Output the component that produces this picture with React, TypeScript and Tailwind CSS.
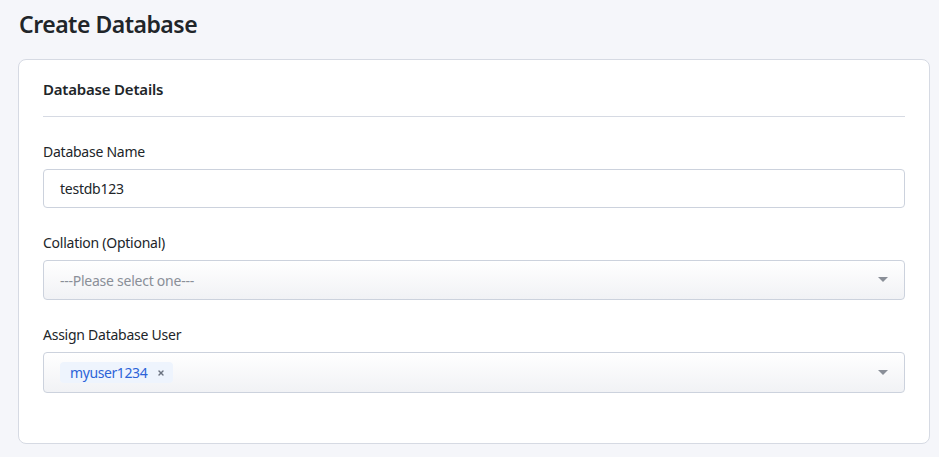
import { X } from "lucide-react";

function Caret() {
  return (
    <svg width="10" height="6" viewBox="0 0 10 6" className="shrink-0">
      <path d="M0 0h10L5 5z" fill="#8a8f98" />
    </svg>
  );
}

export default function App() {
  return (
    <div className="min-h-screen bg-[#f5f6fa] px-[18px] pt-[8px] pb-4 font-['Noto_Sans',sans-serif] text-[#212529]">
      <h1 className="text-[23px] font-semibold leading-[32px] tracking-[-0.5px] pl-[1px] mb-[19px]">
        Create Database
      </h1>

      <div className="w-[912px] rounded-[8px] border border-[#d6dae3] bg-white px-[24px] pt-[18px] pb-[50px]">
        <h2 className="text-[15px] font-semibold leading-[22px] tracking-[-0.2px] pb-[16px] border-b border-[#d6dae3]">
          Database Details
        </h2>

        <div className="mt-[25px] text-[14px] tracking-[-0.25px]">
          <label className="block leading-[20px] mb-[7px]">
            Database Name
          </label>
          <div className="flex h-[39px] items-center rounded-[4px] border border-[#ccd2dd] bg-white px-[16px]">
            testdb123
          </div>
        </div>

        <div className="mt-[25px] text-[14px] tracking-[-0.25px]">
          <label className="block leading-[20px] mb-[7px]">
            Collation (Optional)
          </label>
          <div className="flex h-[40px] items-center justify-between rounded-[4px] border border-[#ccd2dd] bg-gradient-to-b from-white to-[#f1f2f5] px-[16px] text-[#8a8f98]">
            <span>---Please select one---</span>
            <Caret />
          </div>
        </div>

        <div className="mt-[25px] text-[14px] tracking-[-0.25px]">
          <label className="block leading-[20px] mb-[7px]">
            Assign Database User
          </label>
          <div className="flex h-[41px] items-center justify-between rounded-[4px] border border-[#ccd2dd] bg-gradient-to-b from-white to-[#f1f2f5] px-[16px]">
            <span className="flex h-[21px] items-center gap-[10px] rounded-[4px] bg-[#eef4fd] pl-[10px] pr-[8px] text-[#2c63d8] tracking-[-0.4px]">
              myuser1234
              <X className="h-[8px] w-[8px] text-[#6b7280]" strokeWidth={4} />
            </span>
            <Caret />
          </div>
        </div>
      </div>
    </div>
  );
}
